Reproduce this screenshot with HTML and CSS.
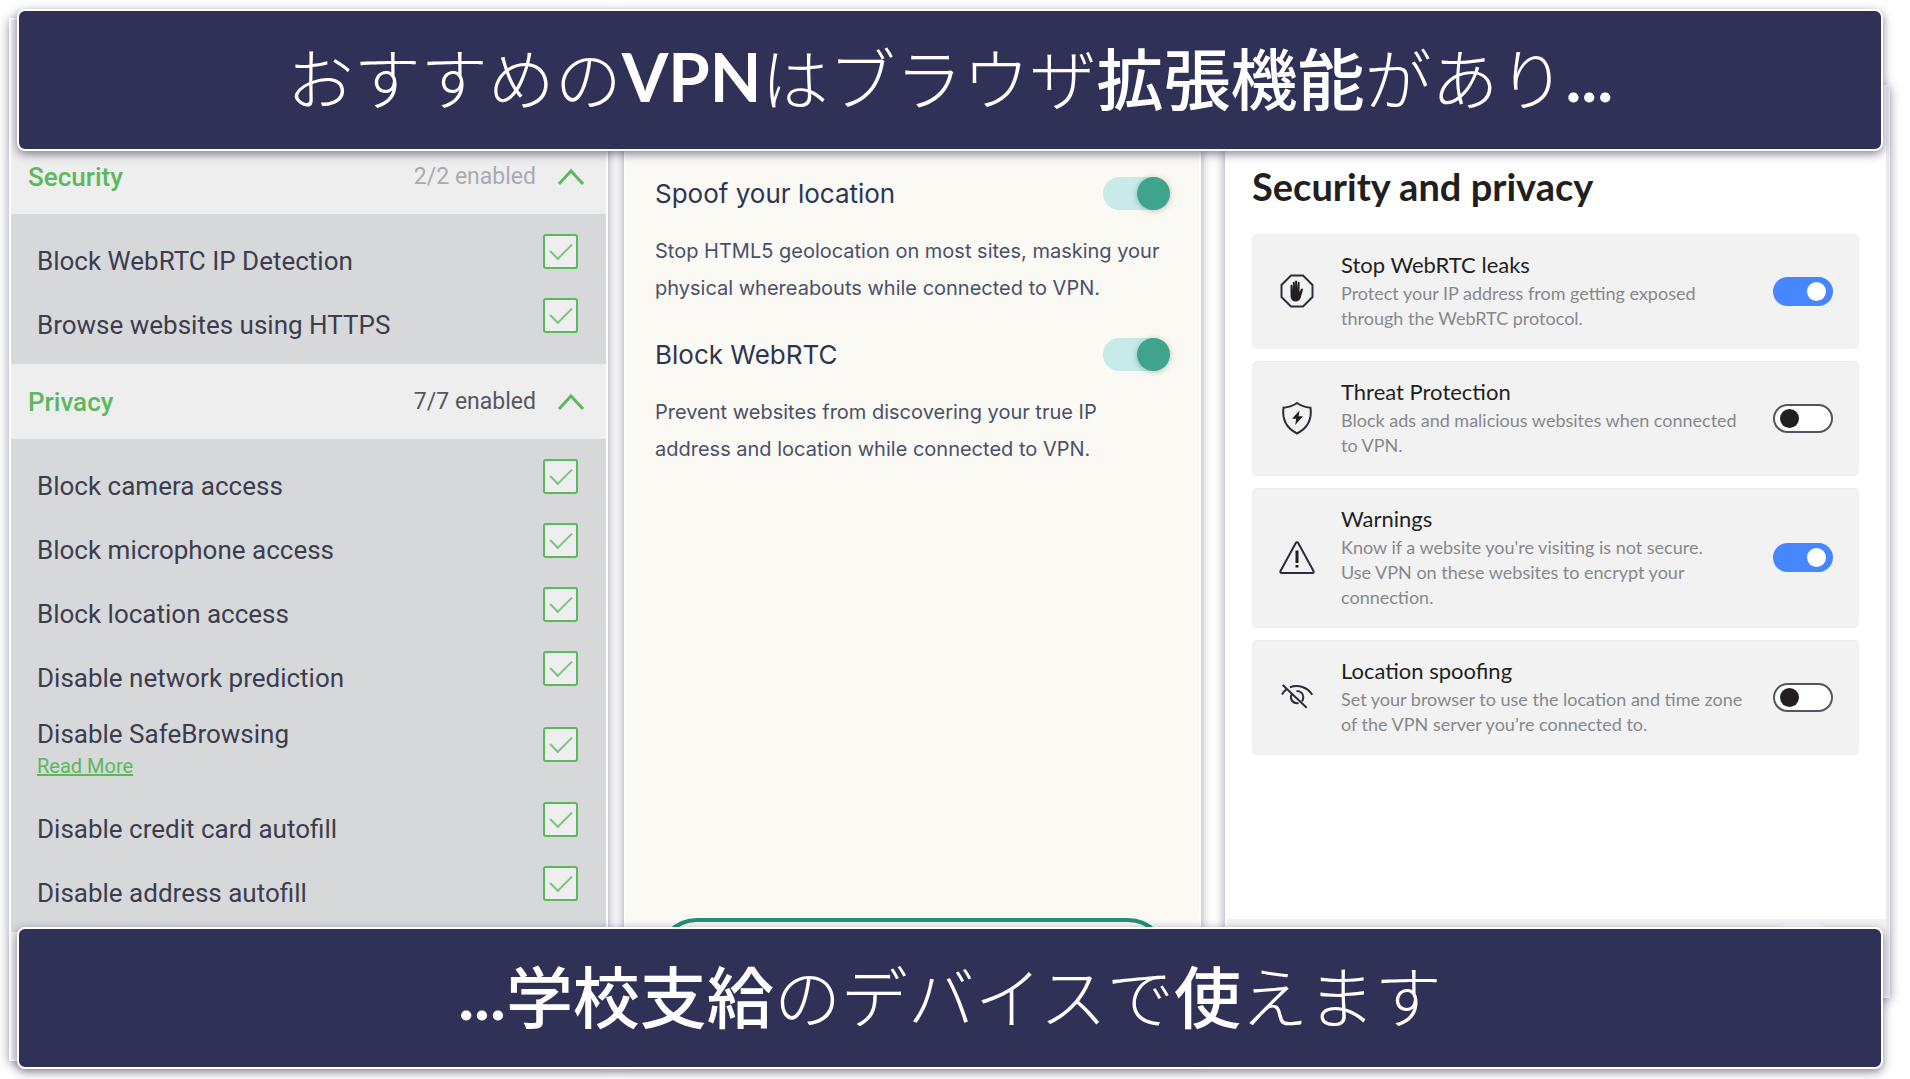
FILE: index.html
```html
<!DOCTYPE html>
<html lang="ja">
<head>
  <meta charset="UTF-8">
  <title>VPN ブラウザ拡張機能</title>
  <meta name="viewport" content="width=device-width, initial-scale=1.0">
  <link rel="stylesheet" href="styles.css">
</head>
<body>
  <h1 class="banner banner-top">おすすめの<b class="latin">VPN</b>はブラウザ<b>拡張機能</b>があり<b class="latin">...</b></h1>

  <main class="panels" lang="en">
    <section class="panel panel-green">
      <button class="group-head">
        <span class="group-name">Security</span>
        <span class="group-count muted">2/2 enabled</span>
        <svg class="chevron" viewBox="0 0 28 18"><path d="M2 16 14 3 26 16"/></svg>
      </button>
      <div class="group">
        <label class="check-row"><span>Block WebRTC IP Detection</span><input type="checkbox" checked></label>
        <label class="check-row"><span>Browse websites using HTTPS</span><input type="checkbox" checked></label>
      </div>
      <button class="group-head">
        <span class="group-name">Privacy</span>
        <span class="group-count">7/7 enabled</span>
        <svg class="chevron" viewBox="0 0 28 18"><path d="M2 16 14 3 26 16"/></svg>
      </button>
      <div class="group">
        <label class="check-row"><span>Block camera access</span><input type="checkbox" checked></label>
        <label class="check-row"><span>Block microphone access</span><input type="checkbox" checked></label>
        <label class="check-row"><span>Block location access</span><input type="checkbox" checked></label>
        <label class="check-row"><span>Disable network prediction</span><input type="checkbox" checked></label>
        <div class="check-row tall">
          <div class="check-text">
            <label for="safe">Disable SafeBrowsing</label>
            <a href="#">Read More</a>
          </div>
          <input type="checkbox" id="safe" checked>
        </div>
        <label class="check-row"><span>Disable credit card autofill</span><input type="checkbox" checked></label>
        <label class="check-row"><span>Disable address autofill</span><input type="checkbox" checked></label>
      </div>
    </section>

    <section class="panel panel-cream">
      <div class="option">
        <div class="option-head">
          <label for="spoof">Spoof your location</label>
          <input type="checkbox" class="switch-teal" id="spoof" checked>
        </div>
        <p>Stop HTML5 geolocation on most sites, masking your physical whereabouts while connected to VPN.</p>
      </div>
      <div class="option">
        <div class="option-head">
          <label for="webrtc">Block WebRTC</label>
          <input type="checkbox" class="switch-teal" id="webrtc" checked>
        </div>
        <p>Prevent websites from discovering your true IP address and location while connected to VPN.</p>
      </div>
      <button class="outline-btn"></button>
    </section>

    <section class="panel panel-white">
      <h2>Security and privacy</h2>
      <div class="cards">
        <div class="card">
          <svg class="icon" viewBox="0 0 36 36">
            <path class="line" d="M12 2.500h12l9.500 9.500v12L24 33.500H12L2.500 24V12z"/>
            <path class="solid" d="M11.500 13c0-1.600 1.700-1.600 1.900 0l.4 4V10c0-1.600 1.900-1.600 2 0l.3 6V8.800c0-1.600 2-1.600 2 0l.2 7.200.4-6c.1-1.600 1.900-1.500 1.900.1L20.500 19l1.300-2.600c.8-1.500 2.600-1 2.100.6l-2 7c-.9 2.900-2.400 4.500-5 4.500-3.700 0-5.400-2.500-5.400-6.500z"/>
          </svg>
          <div class="card-text">
            <label for="leaks">Stop WebRTC leaks</label>
            <p>Protect your IP address from getting exposed through the WebRTC protocol.</p>
          </div>
          <input type="checkbox" class="switch-blue" id="leaks" checked>
        </div>
        <div class="card">
          <svg class="icon" viewBox="0 0 36 36">
            <path class="line" d="M18 3c3.500 2.600 8 4.200 13.500 4.700C33 19 29 28 18 33.500 7 28 3 19 4.500 7.700 10 7.200 14.500 5.600 18 3z"/>
            <path class="solid" d="M20.500 10.500 13 18.800h4.200l-1 6.200 7.800-8.800h-4.300z"/>
          </svg>
          <div class="card-text">
            <label for="threat">Threat Protection</label>
            <p>Block ads and malicious websites when connected to VPN.</p>
          </div>
          <input type="checkbox" class="switch-blue" id="threat">
        </div>
        <div class="card">
          <svg class="icon" viewBox="0 0 36 36">
            <path class="line" d="M16.800 3c.5-1 1.900-1 2.400 0L34.500 31c.5 1-.1 2-1.200 2H2.700c-1.100 0-1.700-1-1.200-2z"/>
            <path class="thick" d="M18 10.500v12.500M18 25v2.500"/>
          </svg>
          <div class="card-text">
            <label for="warn">Warnings</label>
            <p>Know if a website you're visiting is not secure.<br>Use VPN on these websites to encrypt your connection.</p>
          </div>
          <input type="checkbox" class="switch-blue" id="warn" checked>
        </div>
        <div class="card">
          <svg class="icon" viewBox="0 0 36 36">
            <path class="line" d="M3.700 6 27.700 28.700M3 15.500c1.300-2.300 2.800-4 4.700-5.500M11 8.300c8.300-3 17.300-.2 22.300 7.500M17.500 12c4 0 6.800 2.700 6.800 6.300 0 1.600-.5 2.900-1.400 4M12.500 15.500c-2 5 1.700 9.500 7 8.500"/>
          </svg>
          <div class="card-text">
            <label for="location">Location spoofing</label>
            <p>Set your browser to use the location and time zone of the VPN server you’re connected to.</p>
          </div>
          <input type="checkbox" class="switch-blue" id="location">
        </div>
      </div>
      <div class="panel-foot"><span class="foot-pill"></span></div>
    </section>
  </main>

  <h1 class="banner banner-bottom"><b class="latin">...</b><b>学校支給</b>のデバイスで<b>使</b>えます</h1>
</body>
</html>
```
FILE: styles.css
```css
* {
  box-sizing: border-box;
}
body {
  margin: 0;
  position: relative;
  min-height: 100vh;
  background: #fff;
  overflow: hidden;
}
button {
  font: inherit;
  cursor: pointer;
}
input {
  appearance: none;
  margin: 0;
  flex-shrink: 0;
  cursor: pointer;
}

/* banners */
.banner {
  position: absolute;
  left: 17px;
  right: 27px;
  z-index: 2;
  height: 142px;
  margin: 0;
  padding-bottom: 8px;
  display: flex;
  align-items: center;
  justify-content: center;
  background: #303156;
  border: 2px solid #fff;
  border-radius: 8px;
  box-shadow: 0 3px 10px rgba(48, 49, 86, 0.6);
  color: #fff;
  font-family: "Noto Sans CJK JP", sans-serif;
  font-size: 67px;
  font-weight: 300;
  line-height: 100px;
  white-space: nowrap;
}
.banner b {
  font-weight: 500;
}
.banner .latin {
  font-family: Lato, "Noto Sans CJK JP", sans-serif;
  font-weight: 700;
}
.banner-top {
  top: 9px;
}
.banner-bottom {
  bottom: 10px;
}

/* panels */
.panels {
  display: grid;
  grid-template-columns: 599fr 577fr 673fr;
  gap: 16px;
  min-height: 100vh;
  padding: 18px 20px 18px 9px;
}
.panel {
  border: 2px solid #fff;
  box-shadow: 0 2px 10px rgba(48, 49, 86, 0.5);
  display: flex;
  flex-direction: column;
}

/* left */
.panel-green {
  padding-top: 119px;
  background: #eee;
  color: #3c3d4e;
  font-family: Roboto, sans-serif;
  font-size: 26px;
}
.group-head {
  display: flex;
  align-items: center;
  height: 75px;
  padding: 0 21px 0 17px;
  border: none;
  background: #eee;
  color: #55565f;
  text-align: left;
}
.group-name {
  flex: 1;
  color: #5cb85c;
  font-weight: 500;
}
.group-count {
  font-size: 23px;
}
.group-count.muted {
  color: #aaaaaf;
}
.chevron {
  width: 28px;
  height: 18px;
  margin-left: 21px;
  fill: none;
  stroke: #5cb85c;
  stroke-width: 3;
}
.group {
  padding: 16px 28px 6px 26px;
  background: #d7d8da;
}
.check-row {
  display: flex;
  justify-content: space-between;
  height: 64px;
  padding-top: 4px;
  line-height: 54px;
}
.check-row.tall {
  height: 87px;
  padding-top: 16px;
}
.check-text {
  display: flex;
  flex-direction: column;
  margin-top: -9px;
  line-height: 32px;
}
.check-text a {
  color: #5cb85c;
  font-size: 20px;
}
.panel-green input {
  width: 35px;
  height: 35px;
  display: flex;
  justify-content: center;
  background: #eee;
  border: 2px solid #5cb85c;
  border-radius: 3px;
}
.panel-green input:checked::after {
  content: "";
  width: 10px;
  height: 19px;
  margin-top: 2px;
  border: solid #7cc47c;
  border-width: 0 2px 2px 0;
  transform: rotate(45deg);
}

/* middle */
.panel-cream {
  padding: 138px 29px 0;
  background: #faf9f4;
  color: #2f3550;
  font-family: Inter, sans-serif;
}
.option {
  margin-bottom: 12px;
}
.option-head {
  display: flex;
  align-items: center;
  justify-content: space-between;
  height: 75px;
  padding-bottom: 4px;
  font-size: 26px;
}
.option p {
  margin: 0;
  color: #4a5068;
  font-size: 20px;
  line-height: 37px;
}
.switch-teal {
  width: 67px;
  height: 33px;
  padding-left: 34px;
  background: #c8ebea;
  border-radius: 17px;
}
.switch-teal::after {
  content: "";
  display: block;
  width: 33px;
  height: 33px;
  background: #3ea58c;
  border-radius: 50%;
  box-shadow: 0 1px 6px rgba(0, 0, 0, 0.25);
}
.outline-btn {
  height: 80px;
  margin: auto 2px 61px;
  background: none;
  border: 4px solid #1f9077;
  border-radius: 40px;
}

/* right */
.panel-white {
  margin: 67px 0 63px 8px;
  padding: 68px 27px 0 25px;
  background: #fff;
  border-right: 4px solid #e9e9ee;
  color: #231f20;
  font-family: Lato, sans-serif;
}
.panel-white h2 {
  margin: 0;
  font-size: 38px;
  font-weight: 700;
  line-height: 62px;
}
.cards {
  display: flex;
  flex-direction: column;
  gap: 12px;
  margin-top: 17px;
}
.card {
  display: flex;
  align-items: center;
  padding: 16px 25px 17px 26px;
  background: #f2f2f2;
  border: 1px solid #eee;
  border-radius: 5px;
}
.icon {
  width: 36px;
  height: 36px;
  margin-right: 26px;
  flex-shrink: 0;
}
.icon .line {
  fill: none;
  stroke: #2c2c3c;
  stroke-width: 2;
}
.icon .thick {
  stroke: #231f20;
  stroke-width: 3;
}
.icon .solid {
  fill: #231f20;
}
.card-text {
  flex: 1;
  margin-right: 20px;
}
.card-text label {
  display: block;
  margin-bottom: 2px;
  font-size: 22px;
  line-height: 28px;
}
.card-text p {
  margin: 0;
  color: #88888c;
  font-size: 18px;
  line-height: 25px;
}
.switch-blue {
  display: flex;
  align-items: center;
  width: 60px;
  height: 29px;
  padding: 0 5px;
  background: #fff;
  border: 2px solid #55555f;
  border-radius: 15px;
}
.switch-blue::after {
  content: "";
  width: 19px;
  height: 19px;
  background: #231f20;
  border-radius: 50%;
}
.switch-blue:checked {
  justify-content: flex-end;
  background: #4687ff;
  border-color: #4687ff;
}
.switch-blue:checked::after {
  background: #fff;
}
.panel-foot {
  display: flex;
  justify-content: flex-end;
  height: 77px;
  margin: auto -27px 0 -25px;
  padding: 5px 54px 0 0;
  background: #f2f2f2;
}
.foot-pill {
  width: 60px;
  height: 29px;
  background: #fafafc;
  border-radius: 15px;
}
```
